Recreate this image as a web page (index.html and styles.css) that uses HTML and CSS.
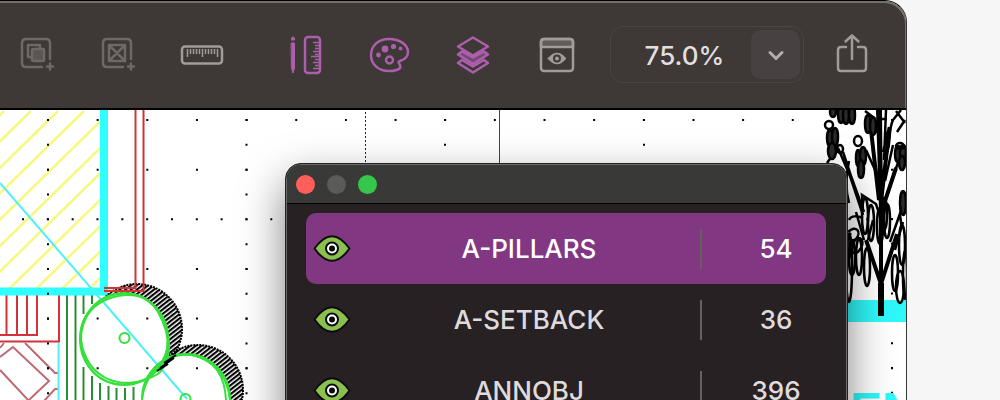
FILE: index.html
```html
<!DOCTYPE html>
<html lang="en">
<head>
    <meta charset="UTF-8">
    <meta name="viewport" content="width=device-width, initial-scale=1.0">
    <title>Layers</title>
    <link rel="stylesheet" href="styles.css">
</head>
<body>
    <main class="window">
        <header class="toolbar">
            <div class="tools tools-edit">
                <button class="tool dim" aria-label="Add group">
                    <svg viewBox="18 34 40 40">
                        <path d="M42 66H26q-4 0-4-4V42q0-4 4-4h20q4 0 4 4v16M50 62.500v6M47 65.500h6"/>
                        <path d="M31 56h-3V44h12v3"/>
                        <rect class="inner" x="32" y="48" width="12" height="12" rx="1"/>
                    </svg>
                </button>
                <button class="tool dim" aria-label="Add block">
                    <svg viewBox="100 34 40 40">
                        <path d="M123 66h-16q-4 0-4-4V42q0-4 4-4h20q4 0 4 4v16M131 62.500v6M128 65.500h6"/>
                        <path d="M109 44h16v16h-16zl16 16M125 44l-16 16"/>
                    </svg>
                </button>
                <button class="tool" aria-label="Measure">
                    <svg viewBox="182 34 40 40">
                        <rect x="182" y="45.500" width="40" height="17" rx="3"/>
                        <path class="ticks" d="M187.500 48v8M190.500 48v5M193.500 48v5M196.500 48v5M199.500 48v5M202.500 48v8M205.500 48v5M208.500 48v5M211.500 48v5M214.500 48v5M217.500 48v8"/>
                    </svg>
                </button>
            </div>
            <div class="tools tools-view">
                <button class="tool active" aria-label="Drawing tools">
                    <svg viewBox="285 34 40 40">
                        <path class="solid" d="M291.500 42h3v25l-1.500 5-1.500-5zM291.500 38q0-2 1.500-2t1.500 2v1h-3z"/>
                        <rect x="305" y="36" width="15" height="36" rx="3"/>
                        <path class="ticks" d="M313 41.500h6M315 44.500h4M315 47.500h4M313 50.500h6M315 53.500h4M311 55.500h8M315 58.500h4M313 61.500h6M315 64.500h4M313 67.500h6"/>
                    </svg>
                </button>
                <button class="tool active" aria-label="Colors">
                    <svg viewBox="369 34 40 40">
                        <path d="M389 38c11 0 19 6 19 13 0 6-5 8-8 9-4 1 2 4 0 7-2 2-7 3-11 3-11 0-18-7-18-16s7-16 18-16z"/>
                        <circle cx="389.500" cy="59" r="3.500"/>
                        <g class="solid dots">
                            <circle cx="378.500" cy="54" r="2.400"/>
                            <circle cx="385" cy="48" r="3.400"/>
                            <circle cx="393.500" cy="45.500" r="2.600"/>
                            <circle cx="400.500" cy="47.500" r="1.900"/>
                        </g>
                    </svg>
                </button>
                <button class="tool active" aria-label="Layers">
                    <svg viewBox="453 34 40 40">
                        <path d="M462 59l-4 3 15 9.500 15-9.500-4-3-11 6.500z"/>
                        <path class="mid" d="M462 50.500l-4 3 15 9.500 15-9.500-4-3-11 6z"/>
                        <path class="top" d="M473 36.500l15 9-15 9-15-9z"/>
                    </svg>
                </button>
                <button class="tool" aria-label="Preview">
                    <svg viewBox="537 34 40 40">
                        <path class="bar" d="M541 46v-5q0-3 3-3h26q3 0 3 3v5z"/>
                        <rect x="541" y="38" width="32" height="32" rx="3"/>
                        <path class="solid" d="M548 57.500q9-11 18 0-9 11-18 0z"/>
                        <circle class="iris" cx="557" cy="57.500" r="3"/>
                    </svg>
                </button>
            </div>
            <div class="zoom">
                <input type="text" value="75.0%" aria-label="Zoom level">
                <button class="zoom-menu" aria-label="Choose zoom level">
                    <svg viewBox="0 0 20 20"><path d="M4 7.500l6 6 6-6"/></svg>
                </button>
            </div>
            <button class="tool share" aria-label="Share">
                <svg viewBox="832 34 40 40">
                    <path d="M846 46h-5q-3 0-3 3v18q0 3 3 3h22q3 0 3-3V49q0-3-3-3h-5M852 58V34.500M845.500 40.500l6.500-6 6.500 6"/>
                </svg>
            </button>
        </header>

        <svg class="canvas" viewBox="0 110 906 290" preserveAspectRatio="xMinYMin slice" aria-label="Site plan">
            <defs>
                <pattern id="hatch" width="3.500" height="10" patternUnits="userSpaceOnUse" patternTransform="rotate(52)">
                    <path class="hatch-line" d="M1 0v10"/>
                </pattern>
                <clipPath id="roof"><path d="M0 110h100v178H0z"/></clipPath>
            </defs>

            <!-- roof hatch -->
            <g clip-path="url(#roof)">
                <path class="roof" d="M4 111l-182 178M31 111l-182 178M58 111l-182 178M84 111l-182 178M111 111l-182 178M138 111l-182 178M164 111l-182 178M191 111l-182 178M218 111l-182 178M244 111l-182 178M271 111l-182 178"/>
            </g>

            <!-- deck and stairs -->
            <path class="deck" d="M67 291v109M75.500 291v109M83.500 291v23M83.500 367v33M92 291v13M92 376v24M100 383v17M108.500 386v14M116.500 388v12M125 388v12M133.500 387v13"/>
            <path class="stairs" d="M6.500 291v44M17 291v44M27 291v44M0 335h37V291M0 341.500h59V291"/>
            <path class="chairs" d="M0 357l13-10 36 34-20 19M0 370l29 31M0 348l4-5M25 343l30 30h4M58 389h-3l-11 12"/>
            <path class="boundary" d="M58.500 343v57M0 183l187 216"/>

            <!-- walls -->
            <path class="wall" d="M104 110v181.500H0"/>

            <!-- shrubs -->
            <circle class="shade" cx="137" cy="329" r="45"/>
            <circle class="leaf-fill" cx="124" cy="338" r="44"/>
            <circle class="shade" cx="198" cy="390" r="45"/>
            <circle class="leaf-fill" cx="186" cy="398" r="44"/>
            <path class="fence" d="M135.500 110v178H104M143.500 110v181H104"/>
            <path class="boundary" d="M92 289l95 110"/>
            <g class="shrub">
                <ellipse cx="124" cy="339" rx="44" ry="46"/>
                <path d="M98 302c20-14 48-10 60 10 14 25 14 48-8 65-24 13-49 8-61-10-14-24-9-48 9-65z"/>
                <path d="M81 340c-4-30 30-52 62-43 28 17 34 60 15 77-35 20-72 5-77-34z"/>
                <circle cx="124.500" cy="338" r="5"/>
                <ellipse cx="186" cy="399" rx="44" ry="45"/>
                <path d="M142 400c4-34 27-52 57-43 20 8 29 24 31 43"/>
                <path d="M144 388c10-24 28-36 49-33 22 4 32 22 33 45"/>
                <circle cx="185.500" cy="399" r="5"/>
            </g>
            <path class="twig" d="M157 371l11-7M160 368l14-10M164 363l12-8"/>

            <!-- snap grid -->
            <g class="grid">
                <path class="wide" d="M47 120H906M47 169.700H906M47 269H906M47 318.600H906M47 368.300H906"/>
                <path class="dense" d="M22 219.300H906"/>
                <path class="dense" d="M48 119v281M246.500 119v281M445 119v281M644 119v281M892 218v182"/>
            </g>

            <!-- property lines -->
            <path class="setback" d="M365.500 112v52"/>
            <path class="property" d="M499.500 110v54"/>

            <!-- road and lettering -->
            <path class="road" d="M848 300h58v22h-58z"/>
            <text class="street" x="850" y="426">EN</text>

            <!-- tree -->
            <g class="tree">
                <path class="trunk" d="M881 316v-33"/>
                <path class="limb" d="M881 283V195M878 110l3 100M880 110l1 100M871 130l8 70M889 132l-8 70M896 168l-15 45M881 284l-15-44M881 284l16-50"/>
                <path d="M838 148l12 28 13 39M843 152l8 24 13 36M832 156l-5 7M865 111l8 6 3 16M886 110l-2 50M893 120c-5 10-2 24-6 32l-4 34M893 120l8-10M905 120l-8 12M896 111l9 12M887 119h-7M889 127l-6 25M866 150l10 22M863 212l-1-17 14 9 4 12M849 161c-3 14-4 28 0 42M899 160l-9 25M893 145l-8 36"/>
                <path d="M849 220c2-5 9-4 14-2M856 212l8 28M848 232c8-8 14 0 8 7-5 4-9-2-5-6M852 246c5-14 14-7 9 2-5 8-10 6-9-2M904 195l-4 20 2 14M895 250l8-28M890 242l12-34M868 240l5-20"/>
                <g class="leaves">
                    <ellipse cx="833" cy="112" rx="3" ry="5"/>
                    <ellipse cx="841" cy="114" rx="3" ry="9"/>
                    <ellipse cx="846" cy="115" rx="3" ry="9"/>
                    <ellipse cx="852" cy="115" rx="3" ry="9"/>
                    <ellipse cx="830" cy="138" rx="3" ry="8"/>
                    <ellipse cx="835" cy="137" rx="3" ry="9"/>
                    <ellipse cx="832" cy="151" rx="4" ry="8"/>
                    <ellipse cx="858" cy="158" rx="2" ry="8"/>
                    <ellipse cx="863" cy="156" rx="3" ry="9"/>
                    <ellipse cx="861" cy="169" rx="3" ry="9"/>
                    <ellipse cx="868" cy="124" rx="3" ry="9"/>
                    <ellipse cx="873" cy="126" rx="3" ry="9"/>
                    <ellipse cx="898" cy="154" rx="3" ry="8"/>
                    <ellipse cx="903" cy="153" rx="3" ry="8"/>
                    <ellipse cx="902" cy="163" rx="3" ry="7"/>
                    <ellipse cx="903" cy="203" rx="3" ry="12"/>
                    <ellipse cx="849" cy="246" rx="2" ry="12"/>
                </g>
                <g class="needles">
                    <ellipse cx="865" cy="216" rx="3" ry="18"/>
                    <ellipse cx="871" cy="223" rx="3" ry="18"/>
                    <ellipse cx="880" cy="226" rx="3" ry="18"/>
                    <ellipse cx="887" cy="221" rx="3" ry="17"/>
                    <ellipse cx="884" cy="214" rx="3" ry="16"/>
                    <ellipse cx="849" cy="268" rx="3" ry="34"/>
                    <ellipse cx="852" cy="258" rx="3" ry="17"/>
                    <ellipse cx="859" cy="257" rx="3" ry="18"/>
                    <ellipse cx="867" cy="267" rx="3" ry="19"/>
                    <ellipse cx="895" cy="273" rx="3" ry="18"/>
                    <ellipse cx="900" cy="287" rx="4" ry="16"/>
                    <ellipse cx="902" cy="245" rx="3" ry="20"/>
                    <ellipse cx="905" cy="275" rx="2" ry="24"/>
                </g>
                <ellipse cx="829" cy="125" rx="4" ry="4"/>
                <ellipse cx="840" cy="149" rx="3" ry="4"/>
                <ellipse cx="858" cy="141" rx="4" ry="5"/>
                <ellipse cx="900" cy="146" rx="4" ry="3"/>
            </g>
        </svg>

        <section class="panel" aria-label="Layers">
            <div class="titlebar">
                <button class="light close" aria-label="Close"></button>
                <button class="light minimize" aria-label="Minimize" disabled></button>
                <button class="light expand" aria-label="Expand"></button>
            </div>
            <table class="layers">
                <tbody>
                    <tr class="selected">
                        <td class="visibility"><button class="eye" aria-label="Hide A-PILLARS"><svg viewBox="0 0 38 27"><path d="M1.500 13.500Q19-11 36.500 13.500 19 38 1.500 13.500z"/><circle class="ring" cx="19" cy="13.500" r="6"/><circle class="pupil" cx="19" cy="13.500" r="3"/></svg></button></td>
                        <td class="name">A-PILLARS</td>
                        <td class="count">54</td>
                    </tr>
                    <tr>
                        <td class="visibility"><button class="eye" aria-label="Hide A-SETBACK"><svg viewBox="0 0 38 27"><path d="M1.500 13.500Q19-11 36.500 13.500 19 38 1.500 13.500z"/><circle class="ring" cx="19" cy="13.500" r="6"/><circle class="pupil" cx="19" cy="13.500" r="3"/></svg></button></td>
                        <td class="name">A-SETBACK</td>
                        <td class="count">36</td>
                    </tr>
                    <tr>
                        <td class="visibility"><button class="eye" aria-label="Hide ANNOBJ"><svg viewBox="0 0 38 27"><path d="M1.500 13.500Q19-11 36.500 13.500 19 38 1.500 13.500z"/><circle class="ring" cx="19" cy="13.500" r="6"/><circle class="pupil" cx="19" cy="13.500" r="3"/></svg></button></td>
                        <td class="name">ANNOBJ</td>
                        <td class="count">396</td>
                    </tr>
                </tbody>
            </table>
        </section>
    </main>
</body>
</html>
```
FILE: styles.css
```css
* {
    box-sizing: border-box;
}
body {
    margin: 0;
    background: #f6f6f6;
    font-family: Inter, Roboto, sans-serif;
    font-size: 26px;
    font-weight: 500;
}
button {
    padding: 0;
    border: 0;
    background: none;
}
svg {
    display: block;
}

.window {
    position: relative;
    height: 100vh;
    margin-right: 93px;
    overflow: hidden;
    background: white;
    border-top: 1px solid black;
    border-right: 1px solid #3a3536;
    border-top-right-radius: 22px;
}

/* toolbar */
.toolbar {
    display: flex;
    align-items: center;
    justify-content: flex-end;
    height: 109px;
    padding-right: 34px;
    background: #3e3836;
    border-bottom: 2px solid black;
    border-top-right-radius: 21px;
    box-shadow: inset -1px 2px 0 #756e6c;
}
.tools {
    display: flex;
}
.tools-edit {
    gap: 42px;
    margin-right: 63px;
}
.tools-view {
    gap: 44px;
    margin-right: 33px;
}
.tool {
    width: 40px;
    height: 40px;
    color: #a19c9a;
}
.tool.dim {
    color: #6e6966;
}
.tool.active {
    color: #ad5fae;
}
.tool svg {
    width: 100%;
    height: 100%;
    overflow: visible;
    fill: none;
    stroke: currentColor;
    stroke-width: 2.5;
    stroke-linecap: round;
    stroke-linejoin: round;
}
.tool .solid {
    fill: currentColor;
    stroke-width: 1;
}
.tool .inner {
    fill: #5b5553;
}
.tool .dots {
    stroke: none;
}
.tool .ticks {
    stroke-width: 1.5;
    stroke-linecap: butt;
}
.tool .mid {
    fill: #754875;
}
.tool .top {
    fill: #3e3836;
}
.tool .bar {
    fill: #625c5a;
}
.tool .iris {
    stroke: #3e3836;
    stroke-width: 2;
}
.zoom {
    display: flex;
    align-items: center;
    width: 194px;
    height: 57px;
    margin-right: 28px;
    padding: 3px;
    border: 1px solid #4a4442;
    border-radius: 13px;
}
.zoom input {
    flex: 1;
    min-width: 0;
    padding: 2px 0 0 4px;
    border: 0;
    background: none;
    color: #e2dfde;
    font: inherit;
    text-align: center;
}
.zoom-menu {
    display: grid;
    place-items: center;
    width: 49px;
    height: 49px;
    border-radius: 10px;
    background: #484142;
    color: #b3aead;
}
.zoom-menu svg {
    width: 20px;
    fill: none;
    stroke: currentColor;
    stroke-width: 3;
    stroke-linecap: round;
    stroke-linejoin: round;
}

/* drawing */
.canvas {
    width: 100%;
    fill: none;
}
.roof {
    stroke: #f8f87c;
    stroke-width: 2.5;
}
.grid {
    stroke: black;
    stroke-width: 2;
}
.grid .wide {
    stroke-dasharray: 2 47.65;
}
.grid .dense {
    stroke-dasharray: 2 22.83;
}
.deck {
    stroke: #2e8b35;
    stroke-width: 2;
}
.stairs,
.fence {
    stroke: #d2333a;
    stroke-width: 2;
}
.chairs {
    stroke: #bd6b70;
    stroke-width: 2;
}
.boundary {
    stroke: #4ff0f5;
    stroke-width: 2;
}
.wall {
    stroke: #2fffff;
    stroke-width: 8;
}
.hatch-line {
    stroke: black;
    stroke-width: 2.2;
}
.shade {
    fill: url(#hatch);
    stroke: black;
    stroke-width: 2;
    stroke-dasharray: 2 1;
}
.leaf-fill {
    fill: white;
}
.shrub {
    stroke: #35e03b;
    stroke-width: 2;
}
.twig {
    stroke: black;
    stroke-width: 2;
}
.setback {
    stroke: #222;
    stroke-dasharray: 2 2;
}
.property {
    stroke: #444;
}
.road,
.street {
    fill: #2ff8fa;
}
.street {
    font: bold 48px "Liberation Sans", sans-serif;
}
.tree {
    stroke: black;
    stroke-width: 2.5;
}
.tree .trunk {
    stroke-width: 6;
}
.tree .limb {
    stroke-width: 4;
}
.tree .leaves {
    fill: #2b2b2b;
}

/* layers panel */
.panel {
    position: absolute;
    top: 162px;
    right: 58px;
    width: 563px;
    padding-bottom: 12px;
    background: #272124;
    border: 1px solid #222;
    border-radius: 16px;
    box-shadow: inset 0 0 0 1px #6a6a6a, 0 18px 44px rgba(0, 0, 0, 0.5);
}
.titlebar {
    display: flex;
    align-items: center;
    gap: 12px;
    height: 39px;
    margin: 1px 1px 9px;
    padding-left: 9px;
    background: #393938;
    border-bottom: 1px solid black;
    border-radius: 14px 14px 0 0;
}
.light {
    width: 19px;
    height: 19px;
    border-radius: 50%;
}
.close {
    background: #ff5f5a;
}
.minimize {
    background: #5b5b59;
}
.expand {
    background: #34c749;
}
.layers {
    width: 520px;
    margin: 0 20px;
    border-collapse: collapse;
    table-layout: fixed;
    color: #dfdbdd;
    text-align: center;
}
.layers tr {
    height: 71px;
}
.layers td {
    padding: 0;
}
.layers .selected {
    color: white;
}
.selected td {
    background: #813781;
}
.selected td:first-child {
    border-radius: 10px 0 0 10px;
}
.selected td:last-child {
    border-radius: 0 10px 10px 0;
}
.layers .visibility {
    width: 52px;
}
.layers .count {
    width: 126px;
    padding-left: 26px;
    background-image: linear-gradient(#66605f, #66605f);
    background-repeat: no-repeat;
    background-position: left center;
    background-size: 2px 40px;
}
.eye {
    display: block;
    width: 38px;
    margin: 0 auto;
}
.eye path {
    fill: #8bc050;
    stroke: #0c0c0c;
    stroke-width: 2;
    stroke-linejoin: round;
}
.eye .ring {
    fill: white;
    stroke: #0c0c0c;
    stroke-width: 2;
}
.eye .pupil {
    fill: #0c0c0c;
}
```
